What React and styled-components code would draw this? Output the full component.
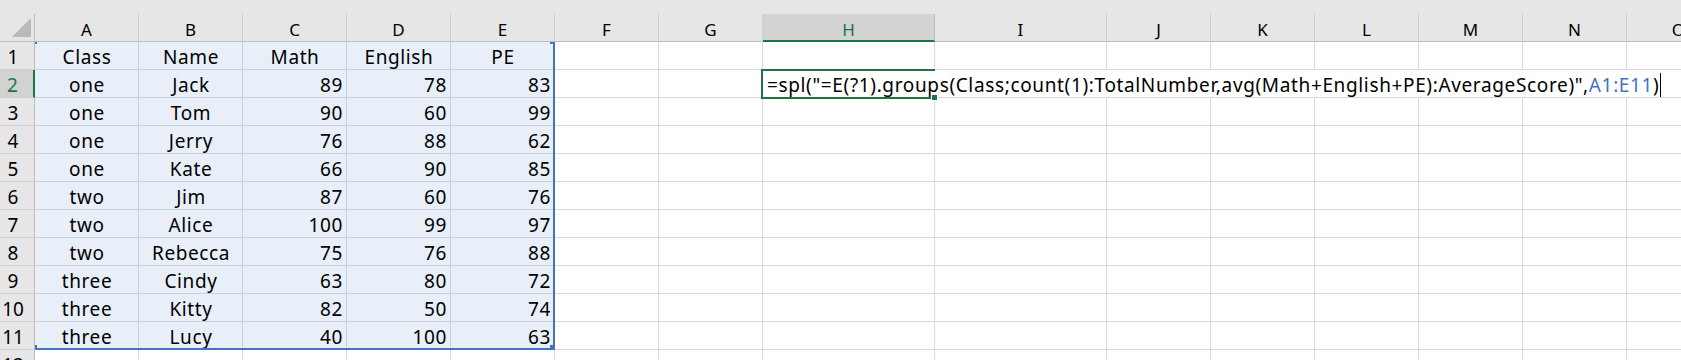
import React from 'react'
import styled, { createGlobalStyle } from 'styled-components'

const GREEN = '#217346'
const BLUE = '#4472c4'

const GlobalStyle = createGlobalStyle`
  html, body {
    margin: 0;
    padding: 0;
    background: #fff;
  }
  body {
    font-family: "Noto Sans", "Liberation Sans", sans-serif;
    overflow: hidden;
  }
`

const columns = [
  { name: 'A', width: 104 },
  { name: 'B', width: 104 },
  { name: 'C', width: 104 },
  { name: 'D', width: 104 },
  { name: 'E', width: 104 },
  { name: 'F', width: 104 },
  { name: 'G', width: 104 },
  { name: 'H', width: 172, active: true },
  { name: 'I', width: 172 },
  { name: 'J', width: 104 },
  { name: 'K', width: 104 },
  { name: 'L', width: 104 },
  { name: 'M', width: 104 },
  { name: 'N', width: 104 },
  { name: 'O', width: 104 },
]

const data = [
  ['Class', 'Name', 'Math', 'English', 'PE'],
  ['one', 'Jack', 89, 78, 83],
  ['one', 'Tom', 90, 60, 99],
  ['one', 'Jerry', 76, 88, 62],
  ['one', 'Kate', 66, 90, 85],
  ['two', 'Jim', 87, 60, 76],
  ['two', 'Alice', 100, 99, 97],
  ['two', 'Rebecca', 75, 76, 88],
  ['three', 'Cindy', 63, 80, 72],
  ['three', 'Kitty', 82, 50, 74],
  ['three', 'Lucy', 40, 100, 63],
]

const ROW_COUNT = 12
const ACTIVE_ROW = 2
const ACTIVE_COL = 7

const Sheet = styled.div`
  display: grid;
  grid-template-columns: 35px 1fr;
  grid-template-rows: 14px 28px 1fr;
  width: 1681px;
  height: 360px;
  overflow: hidden;
  background: #fff;
  color: #000;
`

const TopBand = styled.div`
  grid-column: 1 / -1;
  background: #e6e6e6;
`

const Corner = styled.div`
  display: flex;
  align-items: flex-end;
  justify-content: flex-end;
  box-sizing: border-box;
  padding: 0 3px 4px 0;
  background: #e6e6e6;
  border-right: 1px solid #bdbdbd;
  border-bottom: 1px solid #bdbdbd;
`

const ColumnHeaders = styled.div`
  display: flex;
  overflow: hidden;
  background: #e6e6e6;
`

const ColumnHeader = styled.div`
  flex: none;
  box-sizing: border-box;
  height: 28px;
  padding-top: 4px;
  font-size: 17px;
  line-height: 24px;
  text-align: center;
  background: ${p => (p.$active ? '#d2d2d2' : '#e6e6e6')};
  color: ${p => (p.$active ? GREEN : '#000')};
  border-right: 1px solid ${p => (p.$active ? '#bdbdbd' : '#cfcfcf')};
  border-bottom: ${p => (p.$active ? `2px solid ${GREEN}` : '1px solid #bdbdbd')};
`

const RowHeaders = styled.div`
  display: flex;
  flex-direction: column;
  background: #e6e6e6;
`

const RowHeader = styled.div`
  flex: none;
  box-sizing: border-box;
  height: 28px;
  padding: 3px 8px 0 0;
  font-size: 19px;
  line-height: 25px;
  text-align: center;
  background: ${p => (p.$active ? '#d2d2d2' : '#e6e6e6')};
  color: ${p => (p.$active ? GREEN : '#000')};
  border-bottom: 1px solid #cfcfcf;
  border-right: ${p => (p.$active ? `2px solid ${GREEN}` : '1px solid #bdbdbd')};
`

const Cells = styled.div`
  position: relative;
  display: grid;
  grid-template-columns: ${columns.map(c => `${c.width}px`).join(' ')};
  grid-auto-rows: 28px;
  overflow: hidden;
`

const Cell = styled.div`
  box-sizing: border-box;
  padding: 3px 3px 0 4px;
  font-size: 19px;
  line-height: 25px;
  letter-spacing: 0.6px;
  white-space: nowrap;
  overflow: hidden;
  text-align: ${p => p.$align};
  background: ${p => (p.$inRange ? '#e8eff9' : '#fff')};
  border-right: 1px solid ${p => (p.$inRange ? '#c8d0db' : '#d9d9d9')};
  border-bottom: 1px solid ${p => (p.$inRange ? '#c8d0db' : '#d9d9d9')};
`

const FormulaCell = styled.div`
  position: relative;
  grid-column: span ${p => p.$span};
  box-sizing: border-box;
  padding: 3px 0 0 4px;
  font-size: 19px;
  line-height: 25px;
  letter-spacing: 0.64px;
  white-space: nowrap;
  background: #fff;
  border-bottom: 1px solid #d9d9d9;
`

const RefText = styled.span`
  color: ${BLUE};
`

const Caret = styled.span`
  display: inline-block;
  width: 1px;
  height: 24px;
  margin-left: 1px;
  vertical-align: -5px;
  background: #000;
`

const ActiveFrame = styled.div`
  position: absolute;
  left: -2px;
  top: -1px;
  width: ${p => p.$width}px;
  height: 30px;
  box-sizing: border-box;
  border: 2px solid ${GREEN};
  border-right: none;
  pointer-events: none;
`

const FillHandle = styled.div`
  position: absolute;
  right: -2px;
  bottom: -3px;
  width: 5px;
  height: 5px;
  background: ${GREEN};
  box-shadow: 0 0 0 1px #fff;
`

const RangeFrame = styled.div`
  position: absolute;
  left: 0;
  top: 0;
  width: ${p => p.$width}px;
  height: ${p => p.$height}px;
  box-sizing: border-box;
  border-right: 2px solid ${BLUE};
  border-bottom: 2px solid ${BLUE};
  pointer-events: none;
`

const RangeHandle = styled.div`
  position: absolute;
  width: 5px;
  height: 5px;
  background: ${BLUE};
  ${p => (p.$left ? 'left: -3px;' : 'right: -2px;')}
  ${p => (p.$top ? 'top: -3px;' : 'bottom: -2px;')}
`

// plain cells of one row; the active row stops before the formula cell
function renderCells(r) {
  const values = data[r - 1]
  const cols = r === ACTIVE_ROW ? columns.slice(0, ACTIVE_COL) : columns
  return cols.map((col, c) => {
    const inRange = Boolean(values) && c < 5
    const v = inRange ? values[c] : ''
    return (
      <Cell key={col.name} $inRange={inRange} $align={typeof v === 'number' ? 'right' : 'center'}>
        {v}
      </Cell>
    )
  })
}

export default function App() {
  const rangeWidth = columns.slice(0, 5).reduce((s, c) => s + c.width, 0)
  const rows = []
  for (let r = 1; r <= ROW_COUNT; r++) rows.push(r)

  return (
    <>
      <GlobalStyle />
      <Sheet>
        <TopBand />
        <Corner>
          <svg width="19" height="19" viewBox="0 0 19 19">
            <polygon points="19,0 19,19 0,19" fill="#b9b9b9" />
          </svg>
        </Corner>
        <ColumnHeaders>
          {columns.map(col => (
            <ColumnHeader key={col.name} $active={col.active} style={{ width: col.width }}>
              {col.name}
            </ColumnHeader>
          ))}
        </ColumnHeaders>
        <RowHeaders>
          {rows.map(r => (
            <RowHeader key={r} $active={r === ACTIVE_ROW}>
              {r}
            </RowHeader>
          ))}
        </RowHeaders>
        <Cells>
          {rows.map(r => (
            <React.Fragment key={r}>
              {renderCells(r)}
              {r === ACTIVE_ROW && (
                <FormulaCell $span={columns.length - ACTIVE_COL}>
                  =spl("=E(?1).groups(Class;count(1):TotalNumber,avg(Math+English+PE):AverageScore)",
                  <RefText>A1:E11</RefText>)
                  <Caret />
                  <ActiveFrame $width={columns[ACTIVE_COL].width + 2}>
                    <FillHandle />
                  </ActiveFrame>
                </FormulaCell>
              )}
            </React.Fragment>
          ))}
          <RangeFrame $width={rangeWidth} $height={data.length * 28}>
            <RangeHandle $left $top />
            <RangeHandle $top />
            <RangeHandle $left />
            <RangeHandle />
          </RangeFrame>
        </Cells>
      </Sheet>
    </>
  )
}
